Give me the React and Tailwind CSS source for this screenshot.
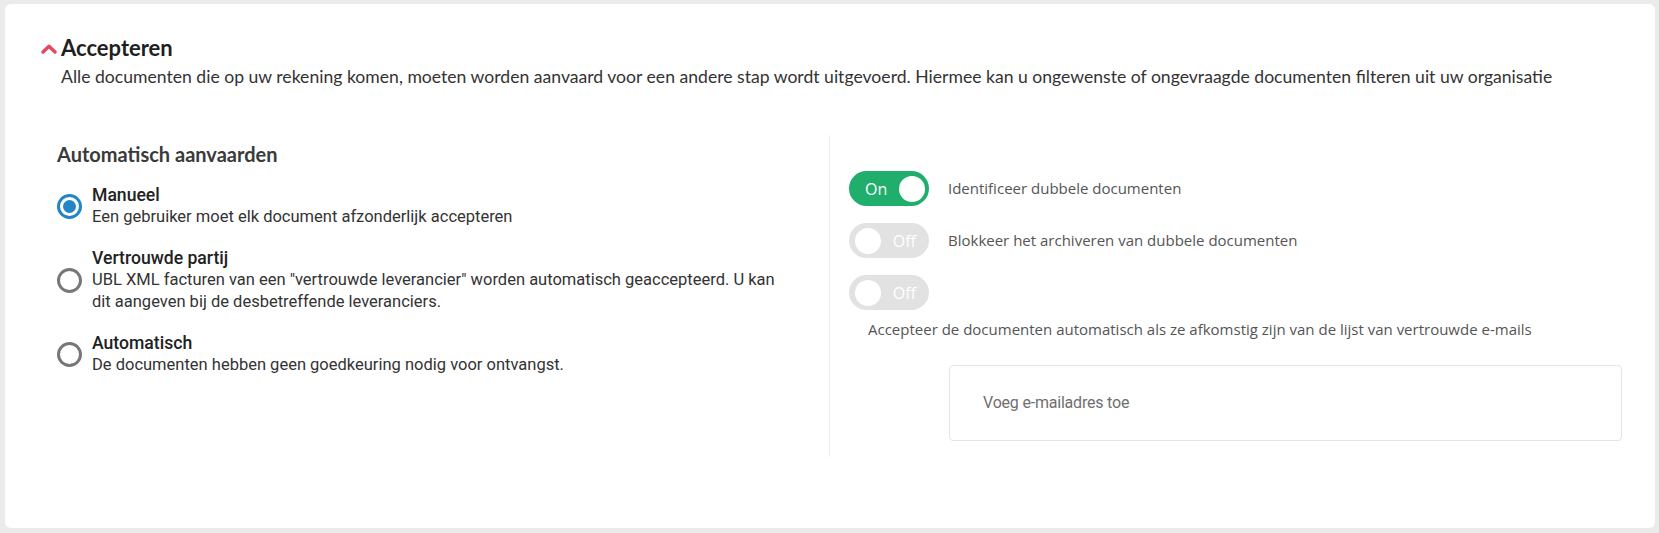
import { useState } from 'react'

function Chevron() {
  return (
    <svg width="16" height="11" viewBox="0 0 16 11" className="shrink-0">
      <polyline points="2,9 8,3.2 14,9" fill="none" stroke="#e3485e" strokeWidth="3.4" strokeLinecap="round" strokeLinejoin="round" />
    </svg>
  )
}

function Radio({ checked }) {
  return (
    <span
      className={
        'flex h-[25px] w-[25px] shrink-0 items-center justify-center rounded-full border-[3px] ' +
        (checked ? 'border-[#2484c6]' : 'border-[#777777]')
      }
    >
      {checked && <span className="h-[13px] w-[13px] rounded-full bg-[#2484c6]" />}
    </span>
  )
}

function Toggle({ on }) {
  if (on) {
    return (
      <span className="flex h-[35px] w-[80px] shrink-0 items-center justify-between rounded-full bg-[#1fae6c] pl-[16px] pr-[4px]">
        <span className="text-[16px] text-white">On</span>
        <span className="h-[26px] w-[26px] rounded-full bg-white" />
      </span>
    )
  }
  return (
    <span className="flex h-[35px] w-[80px] shrink-0 items-center rounded-full bg-[#e2e2e2] pl-[6px] pr-[13px]">
      <span className="h-[26px] w-[26px] rounded-full bg-white" />
      <span className="ml-auto text-[16px] text-white">Off</span>
    </span>
  )
}

const options = [
  { key: 'manual', title: 'Manueel', text: 'Een gebruiker moet elk document afzonderlijk accepteren' },
  {
    key: 'trusted',
    title: 'Vertrouwde partij',
    text: 'UBL XML facturen van een "vertrouwde leverancier" worden automatisch geaccepteerd. U kan dit aangeven bij de desbetreffende leveranciers.',
  },
  { key: 'auto', title: 'Automatisch', text: 'De documenten hebben geen goedkeuring nodig voor ontvangst.' },
]

export default function App() {
  const [choice] = useState('manual')

  return (
    <div className="h-[533px] w-full bg-[#ebebeb] pb-[5px] pl-[5px] pr-[4px] pt-[4px]">
      <div className="h-full rounded-md bg-white pt-[30px]">
        <div className="pl-[36px] font-['Lato',sans-serif]">
          <div className="flex items-center gap-[4px]">
            <Chevron />
            <h2 className="text-[22px] font-bold leading-[28px] text-[#1f1f1f]">Accepteren</h2>
          </div>
          <p className="mt-[3px] pl-[20px] text-[17.6px] leading-[24px] text-[#333333]">
            Alle documenten die op uw rekening komen, moeten worden aanvaard voor een andere stap wordt uitgevoerd. Hiermee kan u ongewenste of ongevraagde documenten filteren uit uw organisatie
          </p>
        </div>

        <div className="mt-[46px] flex pl-[52px] pr-[33px]">
          <div className="w-[772px] pt-[5px]">
            <h3 className="font-['Lato',sans-serif] text-[20px] font-bold leading-[28px] text-[#3a3a3a]">Automatisch aanvaarden</h3>
            <div className="mt-[16px] flex flex-col gap-[19px] font-['Roboto',sans-serif]">
              {options.map((o) => (
                <div key={o.key} className="flex items-center gap-[10px]">
                  <Radio checked={choice === o.key} />
                  <div className="max-w-[705px]">
                    <div className="text-[17.6px] font-medium leading-[22px] text-[#222222]">{o.title}</div>
                    <div className="text-[16.5px] leading-[22px] text-[#333333]">{o.text}</div>
                  </div>
                </div>
              ))}
            </div>
          </div>

          <div className="h-[322px] w-px bg-[#eeeeee]" />

          <div className="flex-1 pl-[19px] pt-[36px] font-['Open_Sans',sans-serif] text-[15px] text-[#555555]">
            <div className="flex flex-col gap-[17px]">
              <div className="flex items-center gap-[19px]">
                <Toggle on />
                <span>Identificeer dubbele documenten</span>
              </div>
              <div className="flex items-center gap-[19px]">
                <Toggle on={false} />
                <span>Blokkeer het archiveren van dubbele documenten</span>
              </div>
              <div className="flex items-center">
                <Toggle on={false} />
              </div>
            </div>
            <p className="mt-[8px] pl-[19px] leading-[22px]">
              Accepteer de documenten automatisch als ze afkomstig zijn van de lijst van vertrouwde e-mails
            </p>
            <div className="ml-[100px] mt-[25px] flex h-[76px] items-center rounded-[4px] border border-[#e4e4e4] px-[33px]">
              <span className="font-['Roboto',sans-serif] text-[16px] tracking-[-0.2px] text-[#6f6f6f]">Voeg e-mailadres toe</span>
            </div>
          </div>
        </div>
      </div>
    </div>
  )
}
